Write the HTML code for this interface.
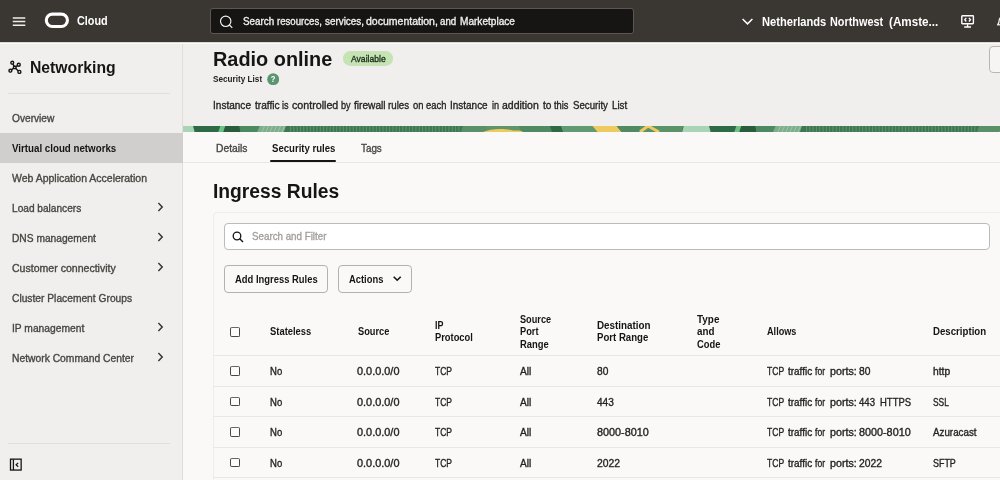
<!DOCTYPE html>
<html lang="en"><head><meta charset="utf-8"><title>Radio online - Security List</title>
<style>
*{box-sizing:border-box;margin:0;padding:0}
html,body{width:1000px;height:480px;overflow:hidden}
body{font-family:"Liberation Sans",sans-serif;background:#f1efed;color:#161513;position:relative}
.a{position:absolute}
.x{position:absolute;white-space:nowrap;transform-origin:0 50%}
#hdr{position:absolute;left:0;top:0;width:1000px;height:42px;background:#3a3632;border-bottom:0}
#side{position:absolute;left:0;top:44px;width:183px;height:436px;background:#f1efed;border-right:1px solid #e1deda}
#lower{position:absolute;left:183px;top:132px;width:817px;height:348px;background:#fbf9f8}
.cb{position:absolute;left:229.8px;width:10.5px;height:9.9px;border:1.2px solid #4a4744;border-top-color:#6b6864;border-radius:2px;background:#fdfcfb}
.hl{position:absolute;left:213.5px;width:787px;height:1px;background:#e9e7e4}
.chev{position:absolute;left:157px;width:7px;height:10px}
.btn{position:absolute;top:265px;height:27.5px;border:1px solid #b4b1ae;border-radius:4px;background:#fbf9f8}
</style></head><body>
<div id="app" style="position:absolute;left:0;top:0;width:1000px;height:480px;overflow:hidden;will-change:transform">
<header id="hdr"></header>
<div class="a" style="left:0;top:42px;width:1000px;height:1px;background:#dcdad7"></div><div class="a" style="left:0;top:43px;width:1000px;height:1px;background:#fbfaf9"></div>
<svg class="a" style="left:12px;top:15px" width="14" height="13" viewBox="0 0 14 13"><path d="M0.8 2.9h12.5M0.8 6.55h12.5M0.8 10.15h12.5" stroke="#efedea" stroke-width="1.5" fill="none"/></svg>
<svg class="a" style="left:43px;top:11px" width="28" height="19" viewBox="0 0 28 19"><rect x="3.3" y="3.1" width="21.15" height="12.45" rx="6.22" ry="6.22" fill="none" stroke="#fff" stroke-width="3.1"/></svg>
<div class="a" style="left:210px;top:8px;width:424px;height:25.7px;background:#161513;border:1px solid #5c5753;border-radius:3px"></div>
<svg class="a" style="left:219px;top:15px" width="15" height="14" viewBox="0 0 15 14"><circle cx="6.7" cy="6.3" r="5.2" fill="none" stroke="#f5f3f1" stroke-width="1.15"/><path d="M10.4 10l2.9 2.9" stroke="#f5f3f1" stroke-width="1.15"/></svg>
<svg class="a" style="left:741px;top:17px" width="13" height="9" viewBox="0 0 13 9"><path d="M1.6 2l4.9 4.9L11.4 2" stroke="#fff" stroke-width="1.5" fill="none"/></svg>
<svg class="a" style="left:961px;top:15px" width="14" height="13" viewBox="0 0 14 13"><rect x="0.8" y="0.7" width="11.6" height="8" rx="0.6" fill="none" stroke="#fff" stroke-width="1.4"/><path d="M6.6 9.2v2.4M3.2 12h6.8" stroke="#fff" stroke-width="1.3"/><path d="M5.3 2.9L3.7 4.7l1.6 1.8M7.9 2.9l1.6 1.8-1.6 1.8" stroke="#fff" stroke-width="1.3" fill="none"/></svg>
<svg class="a" style="left:996.7px;top:15.6px" width="6" height="11" viewBox="0 0 6 11"><path d="M0.8 8.5c1.2-1 1.4-2.6 1.4-4.4 0-1.8 1.4-3.2 3.8-3.2" stroke="#fff" stroke-width="1.2" fill="none"/><path d="M0 8.8h6" stroke="#fff" stroke-width="1.2"/></svg>

<nav id="side"></nav>
<svg class="a" style="left:8px;top:60px" width="15" height="15" viewBox="0 0 15 15"><g stroke="#161513" stroke-width="1.4" fill="none"><path d="M6.75 7.4L4.25 2.75M6.75 7.4L10.75 4.75M6.75 7.4L2.4 10.65M6.75 7.4L11.4 11.9"/></g><g fill="#f1efed" stroke="#161513" stroke-width="1.4"><circle cx="4.25" cy="2.75" r="1.45"/><circle cx="10.75" cy="4.75" r="1.5"/><circle cx="2.4" cy="10.65" r="1.45"/><circle cx="11.4" cy="11.9" r="1.5"/><rect x="5.55" y="6.2" width="2.4" height="2.4" rx="0.4"/></g></svg>
<div class="a" style="left:7.5px;top:92.5px;width:162px;height:1px;background:#e2dfdb"></div>
<div class="a" style="left:0;top:133px;width:182.5px;height:29.5px;background:#d1cfcd"></div>
<svg class="chev" style="top:202px" viewBox="0 0 7 10"><path d="M1.4 1.1l3.8 3.9-3.8 3.9" stroke="#3a3734" stroke-width="1.5" fill="none"/></svg>
<svg class="chev" style="top:232px" viewBox="0 0 7 10"><path d="M1.4 1.1l3.8 3.9-3.8 3.9" stroke="#3a3734" stroke-width="1.5" fill="none"/></svg>
<svg class="chev" style="top:262px" viewBox="0 0 7 10"><path d="M1.4 1.1l3.8 3.9-3.8 3.9" stroke="#3a3734" stroke-width="1.5" fill="none"/></svg>
<svg class="chev" style="top:322px" viewBox="0 0 7 10"><path d="M1.4 1.1l3.8 3.9-3.8 3.9" stroke="#3a3734" stroke-width="1.5" fill="none"/></svg>
<svg class="chev" style="top:352px" viewBox="0 0 7 10"><path d="M1.4 1.1l3.8 3.9-3.8 3.9" stroke="#3a3734" stroke-width="1.5" fill="none"/></svg>
<div class="a" style="left:7.5px;top:443px;width:162px;height:1px;background:#e2dfdb"></div>
<svg class="a" style="left:9px;top:457.5px" width="14" height="14" viewBox="0 0 14 14"><rect x="1.5" y="1.15" width="10.65" height="10.9" fill="none" stroke="#161513" stroke-width="1.3"/><path d="M4.4 1.2v10.8" stroke="#161513" stroke-width="1.3"/><path d="M9.2 4.9L7.1 6.8l2.1 1.9" stroke="#161513" stroke-width="1.2" fill="none"/></svg>

<!-- title area -->
<div class="a" style="left:342.5px;top:51.2px;width:50px;height:14.6px;border-radius:7.3px;background:#c5e3b3"></div>
<svg class="a" style="left:266.5px;top:72.8px" width="12.4" height="12.4" viewBox="0 0 12.4 12.4"><circle cx="6.2" cy="6.2" r="6" fill="#5a966f"/><text x="6.2" y="9.3" font-family="Liberation Sans, sans-serif" font-size="9" font-weight="bold" fill="#fff" text-anchor="middle" transform="translate(0.95 0) scale(0.85 1)">?</text></svg>
<div class="a" style="left:989.4px;top:46px;width:20px;height:26.6px;border:1px solid #b9b5b1;border-radius:4px;background:#f7f5f3"></div>

<main id="lower"></main>
<svg class="a" style="left:183px;top:126px" width="817" height="6" viewBox="183 0 817 6" preserveAspectRatio="none">
<rect x="183" y="0" width="817" height="6" fill="#3f7752"/>
<polygon points="167.8,0 193.4,0 195.0,6 166.2,6" fill="#a9d4b5"/>
<polygon points="193.1,0 220.6,0 218.6,6 194.7,6" fill="#2e6a46"/>
<polygon points="220.3,0 225.6,0 223.6,6 218.3,6" fill="#6cc283"/>
<polygon points="225.3,0 239.6,0 240.6,6 223.3,6" fill="#2a5c3c"/>
<polygon points="239.3,0 259.9,0 257.4,6 240.3,6" fill="#4b8a60"/>
<polygon points="259.6,0 286.3,0 284.3,6 257.1,6" fill="#7fae8c"/>
<polygon points="286.0,0 463.3,0 461.3,6 284.0,6" fill="#3f7752"/>
<polygon points="463.0,0 487.3,0 487.3,6 461.0,6" fill="#5a9069"/>
<polygon points="487.0,0 519.3,0 521.3,6 487.0,6" fill="#5f9569"/>
<polygon points="519.0,0 550.3,0 552.3,6 521.0,6" fill="#4f8a62"/>
<polygon points="550.0,0 561.3,0 563.3,6 552.0,6" fill="#2e6a46"/>
<polygon points="561.0,0 592.8,0 597.8,6 563.0,6" fill="#5f9a72"/>
<polygon points="592.5,0 616.8,0 621.8,6 597.5,6" fill="#efcb5f"/>
<polygon points="616.5,0 640.3,0 640.3,6 621.5,6" fill="#4f8a62"/>
<polygon points="640.0,0 683.1,0 681.5,6 640.0,6" fill="#5b9369"/>
<rect x="290.0" y="0" width="1.1" height="6" fill="#79ab89" opacity="0.5"/>
<rect x="293.3" y="0" width="1.1" height="6" fill="#79ab89" opacity="0.5"/>
<rect x="296.6" y="0" width="1.1" height="6" fill="#79ab89" opacity="0.5"/>
<rect x="299.9" y="0" width="1.1" height="6" fill="#79ab89" opacity="0.5"/>
<rect x="303.2" y="0" width="1.1" height="6" fill="#79ab89" opacity="0.5"/>
<rect x="306.5" y="0" width="1.1" height="6" fill="#79ab89" opacity="0.5"/>
<rect x="309.8" y="0" width="1.1" height="6" fill="#79ab89" opacity="0.5"/>
<rect x="313.1" y="0" width="1.1" height="6" fill="#79ab89" opacity="0.5"/>
<rect x="316.4" y="0" width="1.1" height="6" fill="#79ab89" opacity="0.5"/>
<rect x="319.7" y="0" width="1.1" height="6" fill="#79ab89" opacity="0.5"/>
<rect x="323.0" y="0" width="1.1" height="6" fill="#79ab89" opacity="0.5"/>
<rect x="326.3" y="0" width="1.1" height="6" fill="#79ab89" opacity="0.5"/>
<rect x="329.6" y="0" width="1.1" height="6" fill="#79ab89" opacity="0.5"/>
<rect x="332.9" y="0" width="1.1" height="6" fill="#79ab89" opacity="0.5"/>
<rect x="336.2" y="0" width="1.1" height="6" fill="#79ab89" opacity="0.5"/>
<rect x="339.5" y="0" width="1.1" height="6" fill="#79ab89" opacity="0.5"/>
<rect x="342.8" y="0" width="1.1" height="6" fill="#79ab89" opacity="0.5"/>
<rect x="346.1" y="0" width="1.1" height="6" fill="#79ab89" opacity="0.5"/>
<rect x="349.4" y="0" width="1.1" height="6" fill="#79ab89" opacity="0.5"/>
<rect x="352.7" y="0" width="1.1" height="6" fill="#79ab89" opacity="0.5"/>
<rect x="356.0" y="0" width="1.1" height="6" fill="#79ab89" opacity="0.5"/>
<rect x="359.3" y="0" width="1.1" height="6" fill="#79ab89" opacity="0.5"/>
<rect x="362.6" y="0" width="1.1" height="6" fill="#79ab89" opacity="0.5"/>
<rect x="365.9" y="0" width="1.1" height="6" fill="#79ab89" opacity="0.5"/>
<rect x="369.2" y="0" width="1.1" height="6" fill="#79ab89" opacity="0.5"/>
<rect x="372.5" y="0" width="1.1" height="6" fill="#79ab89" opacity="0.5"/>
<rect x="375.8" y="0" width="1.1" height="6" fill="#79ab89" opacity="0.5"/>
<rect x="379.1" y="0" width="1.1" height="6" fill="#79ab89" opacity="0.5"/>
<rect x="382.4" y="0" width="1.1" height="6" fill="#79ab89" opacity="0.5"/>
<rect x="385.7" y="0" width="1.1" height="6" fill="#79ab89" opacity="0.5"/>
<rect x="389.0" y="0" width="1.1" height="6" fill="#79ab89" opacity="0.5"/>
<rect x="392.3" y="0" width="1.1" height="6" fill="#79ab89" opacity="0.5"/>
<rect x="395.6" y="0" width="1.1" height="6" fill="#79ab89" opacity="0.5"/>
<rect x="398.9" y="0" width="1.1" height="6" fill="#79ab89" opacity="0.5"/>
<rect x="402.2" y="0" width="1.1" height="6" fill="#79ab89" opacity="0.5"/>
<rect x="405.5" y="0" width="1.1" height="6" fill="#79ab89" opacity="0.5"/>
<rect x="408.8" y="0" width="1.1" height="6" fill="#79ab89" opacity="0.5"/>
<rect x="412.1" y="0" width="1.1" height="6" fill="#79ab89" opacity="0.5"/>
<rect x="415.4" y="0" width="1.1" height="6" fill="#79ab89" opacity="0.5"/>
<rect x="418.7" y="0" width="1.1" height="6" fill="#79ab89" opacity="0.5"/>
<rect x="422.0" y="0" width="1.1" height="6" fill="#79ab89" opacity="0.5"/>
<rect x="425.3" y="0" width="1.1" height="6" fill="#79ab89" opacity="0.5"/>
<rect x="428.6" y="0" width="1.1" height="6" fill="#79ab89" opacity="0.5"/>
<rect x="431.9" y="0" width="1.1" height="6" fill="#79ab89" opacity="0.5"/>
<rect x="435.2" y="0" width="1.1" height="6" fill="#79ab89" opacity="0.5"/>
<rect x="438.5" y="0" width="1.1" height="6" fill="#79ab89" opacity="0.5"/>
<rect x="441.8" y="0" width="1.1" height="6" fill="#79ab89" opacity="0.5"/>
<rect x="445.1" y="0" width="1.1" height="6" fill="#79ab89" opacity="0.5"/>
<rect x="448.4" y="0" width="1.1" height="6" fill="#79ab89" opacity="0.5"/>
<rect x="451.7" y="0" width="1.1" height="6" fill="#79ab89" opacity="0.5"/>
<rect x="455.0" y="0" width="1.1" height="6" fill="#79ab89" opacity="0.5"/>
<rect x="458.3" y="0" width="1.1" height="6" fill="#79ab89" opacity="0.5"/>
<path d="M262.0,6 l2.5,-6" stroke="#cfe5d5" stroke-width="0.7" opacity="0.55"/>
<path d="M266.0,6 l2.5,-6" stroke="#cfe5d5" stroke-width="0.7" opacity="0.55"/>
<path d="M270.0,6 l2.5,-6" stroke="#cfe5d5" stroke-width="0.7" opacity="0.55"/>
<path d="M274.0,6 l2.5,-6" stroke="#cfe5d5" stroke-width="0.7" opacity="0.55"/>
<path d="M278.0,6 l2.5,-6" stroke="#cfe5d5" stroke-width="0.7" opacity="0.55"/>
<path d="M282.0,6 l2.5,-6" stroke="#cfe5d5" stroke-width="0.7" opacity="0.55"/>
<path d="M483,6 C491,2 505,2.5 511,4 S519,3 523,6 Z" fill="#efcb5f"/>
<path d="M640,6 L648,0 M648,0 L659,6" stroke="#efcb5f" stroke-width="3" fill="none"/>
<polygon points="683.8,0 709.4,0 711.0,6 682.2,6" fill="#a9d4b5"/>
<polygon points="709.1,0 736.6,0 734.6,6 710.7,6" fill="#2e6a46"/>
<polygon points="736.3,0 741.6,0 739.6,6 734.3,6" fill="#6cc283"/>
<polygon points="741.3,0 755.6,0 756.6,6 739.3,6" fill="#2a5c3c"/>
<polygon points="755.3,0 775.8,0 773.3,6 756.3,6" fill="#4b8a60"/>
<polygon points="775.5,0 802.3,0 800.3,6 773.0,6" fill="#7fae8c"/>
<polygon points="802.0,0 979.3,0 977.3,6 800.0,6" fill="#3f7752"/>
<polygon points="979.0,0 1003.3,0 1003.3,6 977.0,6" fill="#5a9069"/>
<rect x="806.0" y="0" width="1.1" height="6" fill="#79ab89" opacity="0.5"/>
<rect x="809.3" y="0" width="1.1" height="6" fill="#79ab89" opacity="0.5"/>
<rect x="812.6" y="0" width="1.1" height="6" fill="#79ab89" opacity="0.5"/>
<rect x="815.9" y="0" width="1.1" height="6" fill="#79ab89" opacity="0.5"/>
<rect x="819.2" y="0" width="1.1" height="6" fill="#79ab89" opacity="0.5"/>
<rect x="822.5" y="0" width="1.1" height="6" fill="#79ab89" opacity="0.5"/>
<rect x="825.8" y="0" width="1.1" height="6" fill="#79ab89" opacity="0.5"/>
<rect x="829.1" y="0" width="1.1" height="6" fill="#79ab89" opacity="0.5"/>
<rect x="832.4" y="0" width="1.1" height="6" fill="#79ab89" opacity="0.5"/>
<rect x="835.7" y="0" width="1.1" height="6" fill="#79ab89" opacity="0.5"/>
<rect x="839.0" y="0" width="1.1" height="6" fill="#79ab89" opacity="0.5"/>
<rect x="842.3" y="0" width="1.1" height="6" fill="#79ab89" opacity="0.5"/>
<rect x="845.6" y="0" width="1.1" height="6" fill="#79ab89" opacity="0.5"/>
<rect x="848.9" y="0" width="1.1" height="6" fill="#79ab89" opacity="0.5"/>
<rect x="852.2" y="0" width="1.1" height="6" fill="#79ab89" opacity="0.5"/>
<rect x="855.5" y="0" width="1.1" height="6" fill="#79ab89" opacity="0.5"/>
<rect x="858.8" y="0" width="1.1" height="6" fill="#79ab89" opacity="0.5"/>
<rect x="862.1" y="0" width="1.1" height="6" fill="#79ab89" opacity="0.5"/>
<rect x="865.4" y="0" width="1.1" height="6" fill="#79ab89" opacity="0.5"/>
<rect x="868.7" y="0" width="1.1" height="6" fill="#79ab89" opacity="0.5"/>
<rect x="872.0" y="0" width="1.1" height="6" fill="#79ab89" opacity="0.5"/>
<rect x="875.3" y="0" width="1.1" height="6" fill="#79ab89" opacity="0.5"/>
<rect x="878.6" y="0" width="1.1" height="6" fill="#79ab89" opacity="0.5"/>
<rect x="881.9" y="0" width="1.1" height="6" fill="#79ab89" opacity="0.5"/>
<rect x="885.2" y="0" width="1.1" height="6" fill="#79ab89" opacity="0.5"/>
<rect x="888.5" y="0" width="1.1" height="6" fill="#79ab89" opacity="0.5"/>
<rect x="891.8" y="0" width="1.1" height="6" fill="#79ab89" opacity="0.5"/>
<rect x="895.1" y="0" width="1.1" height="6" fill="#79ab89" opacity="0.5"/>
<rect x="898.4" y="0" width="1.1" height="6" fill="#79ab89" opacity="0.5"/>
<rect x="901.7" y="0" width="1.1" height="6" fill="#79ab89" opacity="0.5"/>
<rect x="905.0" y="0" width="1.1" height="6" fill="#79ab89" opacity="0.5"/>
<rect x="908.3" y="0" width="1.1" height="6" fill="#79ab89" opacity="0.5"/>
<rect x="911.6" y="0" width="1.1" height="6" fill="#79ab89" opacity="0.5"/>
<rect x="914.9" y="0" width="1.1" height="6" fill="#79ab89" opacity="0.5"/>
<rect x="918.2" y="0" width="1.1" height="6" fill="#79ab89" opacity="0.5"/>
<rect x="921.5" y="0" width="1.1" height="6" fill="#79ab89" opacity="0.5"/>
<rect x="924.8" y="0" width="1.1" height="6" fill="#79ab89" opacity="0.5"/>
<rect x="928.1" y="0" width="1.1" height="6" fill="#79ab89" opacity="0.5"/>
<rect x="931.4" y="0" width="1.1" height="6" fill="#79ab89" opacity="0.5"/>
<rect x="934.7" y="0" width="1.1" height="6" fill="#79ab89" opacity="0.5"/>
<rect x="938.0" y="0" width="1.1" height="6" fill="#79ab89" opacity="0.5"/>
<rect x="941.3" y="0" width="1.1" height="6" fill="#79ab89" opacity="0.5"/>
<rect x="944.6" y="0" width="1.1" height="6" fill="#79ab89" opacity="0.5"/>
<rect x="947.9" y="0" width="1.1" height="6" fill="#79ab89" opacity="0.5"/>
<rect x="951.2" y="0" width="1.1" height="6" fill="#79ab89" opacity="0.5"/>
<rect x="954.5" y="0" width="1.1" height="6" fill="#79ab89" opacity="0.5"/>
<rect x="957.8" y="0" width="1.1" height="6" fill="#79ab89" opacity="0.5"/>
<rect x="961.1" y="0" width="1.1" height="6" fill="#79ab89" opacity="0.5"/>
<rect x="964.4" y="0" width="1.1" height="6" fill="#79ab89" opacity="0.5"/>
<rect x="967.7" y="0" width="1.1" height="6" fill="#79ab89" opacity="0.5"/>
<rect x="971.0" y="0" width="1.1" height="6" fill="#79ab89" opacity="0.5"/>
<rect x="974.3" y="0" width="1.1" height="6" fill="#79ab89" opacity="0.5"/>
<path d="M778.0,6 l2.5,-6" stroke="#cfe5d5" stroke-width="0.7" opacity="0.55"/>
<path d="M782.0,6 l2.5,-6" stroke="#cfe5d5" stroke-width="0.7" opacity="0.55"/>
<path d="M786.0,6 l2.5,-6" stroke="#cfe5d5" stroke-width="0.7" opacity="0.55"/>
<path d="M790.0,6 l2.5,-6" stroke="#cfe5d5" stroke-width="0.7" opacity="0.55"/>
<path d="M794.0,6 l2.5,-6" stroke="#cfe5d5" stroke-width="0.7" opacity="0.55"/>
<path d="M798.0,6 l2.5,-6" stroke="#cfe5d5" stroke-width="0.7" opacity="0.55"/>
<path d="M999,6 C1007,2 1021,2.5 1027,4 S1035,3 1039,6 Z" fill="#efcb5f"/>
<path d="M1156,6 L1164,0 M1164,0 L1175,6" stroke="#efcb5f" stroke-width="3" fill="none"/>
</svg>
<!-- tabs -->
<div class="a" style="left:183px;top:162px;width:817px;height:1px;background:#e9e6e3"></div>
<div class="a" style="left:270px;top:159.6px;width:66.2px;height:2.6px;border-radius:1.3px;background:#161513"></div>
<!-- card -->
<div class="a" style="left:213px;top:212.2px;width:800px;height:300px;border:1px solid #efedea;border-radius:4px;background:#fbf9f8"></div>
<div class="a" style="left:223.5px;top:222.5px;width:766.5px;height:27.5px;border:1px solid #bdbbb8;border-radius:4px;background:#fff"></div>
<svg class="a" style="left:232px;top:230.5px" width="12" height="12" viewBox="0 0 12 12"><circle cx="5" cy="5" r="3.8" fill="none" stroke="#161513" stroke-width="1.3"/><path d="M7.8 7.8l3.2 3.2" stroke="#161513" stroke-width="1.4"/></svg>
<div class="btn" style="left:223.5px;width:104.3px"></div>
<div class="btn" style="left:338.2px;width:73.6px"></div>
<svg class="a" style="left:391.9px;top:275.4px" width="10" height="7" viewBox="0 0 10 7"><path d="M1.7 1.7l3.5 3.5 3.5-3.5" stroke="#161513" stroke-width="1.6" fill="none"/></svg>
<!-- table -->
<div class="cb" style="top:326.7px"></div>
<div class="cb" style="top:366.2px"></div>
<div class="cb" style="top:396.6px"></div>
<div class="cb" style="top:427.1px"></div>
<div class="cb" style="top:457.6px"></div>
<div class="hl" style="top:355px"></div>
<div class="hl" style="top:385.8px"></div>
<div class="hl" style="top:416.3px"></div>
<div class="hl" style="top:446.8px"></div>
<div class="hl" style="top:477.3px"></div>
<div id="tx" style="position:absolute;left:0;top:0;width:1000px;height:480px">
<div class="x" style="left:76.80px;top:14.00px;font-size:12.5px;line-height:15px;color:#ffffff;transform:scaleX(0.8685);font-weight:bold">Cloud</div>
<div class="s"><span class="x" style="left:242.80px;top:16.00px;font-size:10.2px;line-height:12px;color:#f1efed;transform:scaleX(0.9648);-webkit-text-stroke:0.34px #f1efed">Search</span> <span class="x" style="left:277.10px;top:16.00px;font-size:10.2px;line-height:12px;color:#f1efed;transform:scaleX(0.9437);-webkit-text-stroke:0.34px #f1efed">resources,</span> <span class="x" style="left:324.70px;top:16.00px;font-size:10.2px;line-height:12px;color:#f1efed;transform:scaleX(0.9705);-webkit-text-stroke:0.34px #f1efed">services,</span> <span class="x" style="left:366.00px;top:16.00px;font-size:10.2px;line-height:12px;color:#f1efed;transform:scaleX(1.0315);-webkit-text-stroke:0.34px #f1efed">documentation,</span> <span class="x" style="left:440.20px;top:16.00px;font-size:10.2px;line-height:12px;color:#f1efed;transform:scaleX(0.9520);-webkit-text-stroke:0.34px #f1efed">and</span> <span class="x" style="left:460.10px;top:16.00px;font-size:10.2px;line-height:12px;color:#f1efed;transform:scaleX(0.9888);-webkit-text-stroke:0.34px #f1efed">Marketplace</span></div>
<div class="s"><span class="x" style="left:762.00px;top:15.00px;font-size:12.6px;line-height:15px;color:#ffffff;transform:scaleX(0.8835);font-weight:bold">Netherlands</span> <span class="x" style="left:830.40px;top:15.00px;font-size:12.6px;line-height:15px;color:#ffffff;transform:scaleX(0.8625);font-weight:bold">Northwest</span> <span class="x" style="left:888.60px;top:15.00px;font-size:12.6px;line-height:15px;color:#ffffff;transform:scaleX(0.9262);font-weight:bold">(Amste...</span></div>
<div class="x" style="left:29.62px;top:58.00px;font-size:16px;line-height:19px;color:#161513;transform:scaleX(0.9831);font-weight:bold">Networking</div>
<div class="x" style="left:12.00px;top:113.00px;font-size:10.2px;line-height:12px;color:#484542;transform:scaleX(0.9977);-webkit-text-stroke:0.34px #484542">Overview</div>
<div class="x" style="left:12.20px;top:142.00px;font-size:10.7px;line-height:13px;color:#161513;transform:scaleX(0.9111);font-weight:bold">Virtual cloud networks</div>
<div class="x" style="left:12.00px;top:173.00px;font-size:10.2px;line-height:12px;color:#484542;transform:scaleX(1.0292);-webkit-text-stroke:0.34px #484542">Web Application Acceleration</div>
<div class="x" style="left:12.40px;top:203.00px;font-size:10.2px;line-height:12px;color:#484542;transform:scaleX(0.9932);-webkit-text-stroke:0.34px #484542">Load balancers</div>
<div class="x" style="left:12.40px;top:233.00px;font-size:10.2px;line-height:12px;color:#484542;transform:scaleX(1.0015);-webkit-text-stroke:0.34px #484542">DNS management</div>
<div class="x" style="left:12.00px;top:263.00px;font-size:10.2px;line-height:12px;color:#484542;transform:scaleX(1.0354);-webkit-text-stroke:0.34px #484542">Customer connectivity</div>
<div class="x" style="left:12.00px;top:293.00px;font-size:10.2px;line-height:12px;color:#484542;transform:scaleX(1.0052);-webkit-text-stroke:0.34px #484542">Cluster Placement Groups</div>
<div class="x" style="left:12.40px;top:323.00px;font-size:10.2px;line-height:12px;color:#484542;transform:scaleX(1.0071);-webkit-text-stroke:0.34px #484542">IP management</div>
<div class="x" style="left:12.40px;top:353.00px;font-size:10.2px;line-height:12px;color:#484542;transform:scaleX(1.0115);-webkit-text-stroke:0.34px #484542">Network Command Center</div>
<div class="x" style="left:213.31px;top:47.00px;font-size:20px;line-height:24px;color:#161513;transform:scaleX(0.9943);font-weight:bold">Radio online</div>
<div class="x" style="left:350.50px;top:53.00px;font-size:9.4px;line-height:11px;color:#1a2e1d;transform:scaleX(0.9161);-webkit-text-stroke:0.34px #1a2e1d">Available</div>
<div class="x" style="left:213.40px;top:73.00px;font-size:9.7px;line-height:12px;color:#201e1c;transform:scaleX(0.8452);font-weight:bold">Security List</div>
<div class="s"><span class="x" style="left:212.98px;top:99.00px;font-size:10.9px;line-height:13px;color:#262422;transform:scaleX(0.9224);-webkit-text-stroke:0.34px #262422">Instance</span> <span class="x" style="left:254.50px;top:99.00px;font-size:10.9px;line-height:13px;color:#262422;transform:scaleX(0.9302);-webkit-text-stroke:0.34px #262422">traffic</span> <span class="x" style="left:282.41px;top:99.00px;font-size:10.9px;line-height:13px;color:#262422;transform:scaleX(0.8400);-webkit-text-stroke:0.34px #262422">is</span> <span class="x" style="left:292.30px;top:99.00px;font-size:10.9px;line-height:13px;color:#262422;transform:scaleX(0.9796);-webkit-text-stroke:0.34px #262422">controlled</span> <span class="x" style="left:341.09px;top:99.00px;font-size:10.9px;line-height:13px;color:#262422;transform:scaleX(0.8400);-webkit-text-stroke:0.34px #262422">by</span> <span class="x" style="left:353.50px;top:99.00px;font-size:10.9px;line-height:13px;color:#262422;transform:scaleX(0.9322);-webkit-text-stroke:0.34px #262422">firewall</span> <span class="x" style="left:387.80px;top:99.00px;font-size:10.9px;line-height:13px;color:#262422;transform:scaleX(0.8982);-webkit-text-stroke:0.34px #262422">rules</span> <span class="x" style="left:412.70px;top:99.00px;font-size:10.9px;line-height:13px;color:#262422;transform:scaleX(0.8626);-webkit-text-stroke:0.34px #262422">on</span> <span class="x" style="left:426.30px;top:99.00px;font-size:10.9px;line-height:13px;color:#262422;transform:scaleX(0.8617);-webkit-text-stroke:0.34px #262422">each</span> <span class="x" style="left:449.59px;top:99.00px;font-size:10.9px;line-height:13px;color:#262422;transform:scaleX(0.9149);-webkit-text-stroke:0.34px #262422">Instance</span> <span class="x" style="left:491.66px;top:99.00px;font-size:10.9px;line-height:13px;color:#262422;transform:scaleX(0.8400);-webkit-text-stroke:0.34px #262422">in</span> <span class="x" style="left:502.30px;top:99.00px;font-size:10.9px;line-height:13px;color:#262422;transform:scaleX(0.9634);-webkit-text-stroke:0.34px #262422">addition</span> <span class="x" style="left:542.50px;top:99.00px;font-size:10.9px;line-height:13px;color:#262422;transform:scaleX(0.9307);-webkit-text-stroke:0.34px #262422">to</span> <span class="x" style="left:554.10px;top:99.00px;font-size:10.9px;line-height:13px;color:#262422;transform:scaleX(0.8570);-webkit-text-stroke:0.34px #262422">this</span> <span class="x" style="left:572.60px;top:99.00px;font-size:10.9px;line-height:13px;color:#262422;transform:scaleX(0.8873);-webkit-text-stroke:0.34px #262422">Security</span> <span class="x" style="left:611.80px;top:99.00px;font-size:10.9px;line-height:13px;color:#262422;transform:scaleX(0.8983);-webkit-text-stroke:0.34px #262422">List</span></div>
<div class="x" style="left:216.20px;top:143.00px;font-size:10.2px;line-height:12px;color:#484542;transform:scaleX(1.0082);-webkit-text-stroke:0.34px #484542">Details</div>
<div class="x" style="left:271.50px;top:142.00px;font-size:10.7px;line-height:13px;color:#161513;transform:scaleX(0.8976);font-weight:bold">Security rules</div>
<div class="x" style="left:361.30px;top:143.00px;font-size:10.2px;line-height:12px;color:#484542;transform:scaleX(0.9662);-webkit-text-stroke:0.34px #484542">Tags</div>
<div class="x" style="left:213.34px;top:179.00px;font-size:20px;line-height:24px;color:#161513;transform:scaleX(0.9628);font-weight:bold">Ingress Rules</div>
<div class="x" style="left:252.00px;top:231.00px;font-size:10.2px;line-height:12px;color:#a39f9b;transform:scaleX(0.9593);-webkit-text-stroke:0.34px #a39f9b">Search and Filter</div>
<div class="x" style="left:234.50px;top:273.00px;font-size:10.7px;line-height:13px;color:#161513;transform:scaleX(0.8808);font-weight:bold">Add Ingress Rules</div>
<div class="x" style="left:349.30px;top:273.00px;font-size:10.7px;line-height:13px;color:#161513;transform:scaleX(0.8765);font-weight:bold">Actions</div>
<div class="x" style="left:269.80px;top:325.00px;font-size:10.6px;line-height:13px;color:#161513;transform:scaleX(0.8878);font-weight:bold">Stateless</div>
<div class="x" style="left:357.50px;top:325.00px;font-size:10.6px;line-height:13px;color:#161513;transform:scaleX(0.8745);font-weight:bold">Source</div>
<div class="x" style="left:435.30px;top:319.00px;font-size:10.6px;line-height:13px;color:#161513;transform:scaleX(0.8448);font-weight:bold">IP</div>
<div class="x" style="left:435.30px;top:331.00px;font-size:10.6px;line-height:13px;color:#161513;transform:scaleX(0.8810);font-weight:bold">Protocol</div>
<div class="x" style="left:519.50px;top:313.00px;font-size:10.6px;line-height:13px;color:#161513;transform:scaleX(0.8661);font-weight:bold">Source</div>
<div class="x" style="left:519.80px;top:325.00px;font-size:10.6px;line-height:13px;color:#161513;transform:scaleX(0.8726);font-weight:bold">Port</div>
<div class="x" style="left:519.80px;top:338.00px;font-size:10.6px;line-height:13px;color:#161513;transform:scaleX(0.8897);font-weight:bold">Range</div>
<div class="x" style="left:597.30px;top:319.00px;font-size:10.6px;line-height:13px;color:#161513;transform:scaleX(0.9299);font-weight:bold">Destination</div>
<div class="x" style="left:597.30px;top:331.00px;font-size:10.6px;line-height:13px;color:#161513;transform:scaleX(0.9079);font-weight:bold">Port Range</div>
<div class="x" style="left:697.00px;top:313.00px;font-size:10.6px;line-height:13px;color:#161513;transform:scaleX(0.9357);font-weight:bold">Type</div>
<div class="x" style="left:697.00px;top:325.00px;font-size:10.6px;line-height:13px;color:#161513;transform:scaleX(0.9258);font-weight:bold">and</div>
<div class="x" style="left:697.00px;top:338.00px;font-size:10.6px;line-height:13px;color:#161513;transform:scaleX(0.8837);font-weight:bold">Code</div>
<div class="x" style="left:766.70px;top:325.00px;font-size:10.6px;line-height:13px;color:#161513;transform:scaleX(0.8614);font-weight:bold">Allows</div>
<div class="x" style="left:932.50px;top:325.00px;font-size:10.6px;line-height:13px;color:#161513;transform:scaleX(0.9117);font-weight:bold">Description</div>
<div class="x" style="left:270.00px;top:366.00px;font-size:10.2px;line-height:12px;color:#262422;transform:scaleX(0.9358);-webkit-text-stroke:0.34px #262422">No</div>
<div class="x" style="left:357.20px;top:366.00px;font-size:10.2px;line-height:12px;color:#262422;transform:scaleX(1.0704);-webkit-text-stroke:0.34px #262422">0.0.0.0/0</div>
<div class="x" style="left:435.30px;top:366.00px;font-size:10.2px;line-height:12px;color:#262422;transform:scaleX(0.8358);-webkit-text-stroke:0.34px #262422">TCP</div>
<div class="x" style="left:519.60px;top:366.00px;font-size:10.2px;line-height:12px;color:#262422;transform:scaleX(0.9947);-webkit-text-stroke:0.34px #262422">All</div>
<div class="x" style="left:597.30px;top:366.00px;font-size:10.2px;line-height:12px;color:#262422;transform:scaleX(1.0029);-webkit-text-stroke:0.34px #262422">80</div>
<div class="s"><span class="x" style="left:766.96px;top:366.00px;font-size:10.2px;line-height:12px;color:#262422;transform:scaleX(0.8400);-webkit-text-stroke:0.34px #262422">TCP</span> <span class="x" style="left:787.50px;top:366.00px;font-size:10.2px;line-height:12px;color:#262422;transform:scaleX(0.9745);-webkit-text-stroke:0.34px #262422">traffic</span> <span class="x" style="left:815.15px;top:366.00px;font-size:10.2px;line-height:12px;color:#262422;transform:scaleX(0.8400);-webkit-text-stroke:0.34px #262422">for</span> <span class="x" style="left:830.10px;top:366.00px;font-size:10.2px;line-height:12px;color:#262422;transform:scaleX(1.0508);-webkit-text-stroke:0.34px #262422">ports:</span> <span class="x" style="left:859.20px;top:366.00px;font-size:10.2px;line-height:12px;color:#262422;transform:scaleX(1.0115);-webkit-text-stroke:0.34px #262422">80</span></div>
<div class="x" style="left:932.50px;top:366.00px;font-size:10.2px;line-height:12px;color:#262422;transform:scaleX(1.0100);-webkit-text-stroke:0.34px #262422">http</div>
<div class="x" style="left:270.00px;top:397.00px;font-size:10.2px;line-height:12px;color:#262422;transform:scaleX(0.9358);-webkit-text-stroke:0.34px #262422">No</div>
<div class="x" style="left:357.20px;top:397.00px;font-size:10.2px;line-height:12px;color:#262422;transform:scaleX(1.0704);-webkit-text-stroke:0.34px #262422">0.0.0.0/0</div>
<div class="x" style="left:435.30px;top:397.00px;font-size:10.2px;line-height:12px;color:#262422;transform:scaleX(0.8358);-webkit-text-stroke:0.34px #262422">TCP</div>
<div class="x" style="left:519.60px;top:397.00px;font-size:10.2px;line-height:12px;color:#262422;transform:scaleX(0.9947);-webkit-text-stroke:0.34px #262422">All</div>
<div class="x" style="left:597.30px;top:397.00px;font-size:10.2px;line-height:12px;color:#262422;transform:scaleX(0.9924);-webkit-text-stroke:0.34px #262422">443</div>
<div class="s"><span class="x" style="left:766.96px;top:397.00px;font-size:10.2px;line-height:12px;color:#262422;transform:scaleX(0.8400);-webkit-text-stroke:0.34px #262422">TCP</span> <span class="x" style="left:787.50px;top:397.00px;font-size:10.2px;line-height:12px;color:#262422;transform:scaleX(0.9745);-webkit-text-stroke:0.34px #262422">traffic</span> <span class="x" style="left:815.15px;top:397.00px;font-size:10.2px;line-height:12px;color:#262422;transform:scaleX(0.8400);-webkit-text-stroke:0.34px #262422">for</span> <span class="x" style="left:830.10px;top:397.00px;font-size:10.2px;line-height:12px;color:#262422;transform:scaleX(1.0508);-webkit-text-stroke:0.34px #262422">ports:</span> <span class="x" style="left:859.20px;top:397.00px;font-size:10.2px;line-height:12px;color:#262422;transform:scaleX(0.9405);-webkit-text-stroke:0.34px #262422">443</span> <span class="x" style="left:879.70px;top:397.00px;font-size:10.2px;line-height:12px;color:#262422;transform:scaleX(0.9316);-webkit-text-stroke:0.34px #262422">HTTPS</span></div>
<div class="x" style="left:932.50px;top:397.00px;font-size:10.2px;line-height:12px;color:#262422;transform:scaleX(0.8270);-webkit-text-stroke:0.34px #262422">SSL</div>
<div class="x" style="left:270.00px;top:427.00px;font-size:10.2px;line-height:12px;color:#262422;transform:scaleX(0.9358);-webkit-text-stroke:0.34px #262422">No</div>
<div class="x" style="left:357.20px;top:427.00px;font-size:10.2px;line-height:12px;color:#262422;transform:scaleX(1.0704);-webkit-text-stroke:0.34px #262422">0.0.0.0/0</div>
<div class="x" style="left:435.30px;top:427.00px;font-size:10.2px;line-height:12px;color:#262422;transform:scaleX(0.8358);-webkit-text-stroke:0.34px #262422">TCP</div>
<div class="x" style="left:519.60px;top:427.00px;font-size:10.2px;line-height:12px;color:#262422;transform:scaleX(0.9947);-webkit-text-stroke:0.34px #262422">All</div>
<div class="x" style="left:597.30px;top:427.00px;font-size:10.2px;line-height:12px;color:#262422;transform:scaleX(1.0642);-webkit-text-stroke:0.34px #262422">8000-8010</div>
<div class="s"><span class="x" style="left:766.96px;top:427.00px;font-size:10.2px;line-height:12px;color:#262422;transform:scaleX(0.8400);-webkit-text-stroke:0.34px #262422">TCP</span> <span class="x" style="left:787.50px;top:427.00px;font-size:10.2px;line-height:12px;color:#262422;transform:scaleX(0.9745);-webkit-text-stroke:0.34px #262422">traffic</span> <span class="x" style="left:815.15px;top:427.00px;font-size:10.2px;line-height:12px;color:#262422;transform:scaleX(0.8400);-webkit-text-stroke:0.34px #262422">for</span> <span class="x" style="left:830.10px;top:427.00px;font-size:10.2px;line-height:12px;color:#262422;transform:scaleX(1.0508);-webkit-text-stroke:0.34px #262422">ports:</span> <span class="x" style="left:859.20px;top:427.00px;font-size:10.2px;line-height:12px;color:#262422;transform:scaleX(1.0601);-webkit-text-stroke:0.34px #262422">8000-8010</span></div>
<div class="x" style="left:932.50px;top:427.00px;font-size:10.2px;line-height:12px;color:#262422;transform:scaleX(0.9612);-webkit-text-stroke:0.34px #262422">Azuracast</div>
<div class="x" style="left:270.00px;top:458.00px;font-size:10.2px;line-height:12px;color:#262422;transform:scaleX(0.9358);-webkit-text-stroke:0.34px #262422">No</div>
<div class="x" style="left:357.20px;top:458.00px;font-size:10.2px;line-height:12px;color:#262422;transform:scaleX(1.0704);-webkit-text-stroke:0.34px #262422">0.0.0.0/0</div>
<div class="x" style="left:435.30px;top:458.00px;font-size:10.2px;line-height:12px;color:#262422;transform:scaleX(0.8358);-webkit-text-stroke:0.34px #262422">TCP</div>
<div class="x" style="left:519.60px;top:458.00px;font-size:10.2px;line-height:12px;color:#262422;transform:scaleX(0.9947);-webkit-text-stroke:0.34px #262422">All</div>
<div class="x" style="left:597.30px;top:458.00px;font-size:10.2px;line-height:12px;color:#262422;transform:scaleX(1.0175);-webkit-text-stroke:0.34px #262422">2022</div>
<div class="s"><span class="x" style="left:766.96px;top:458.00px;font-size:10.2px;line-height:12px;color:#262422;transform:scaleX(0.8400);-webkit-text-stroke:0.34px #262422">TCP</span> <span class="x" style="left:787.50px;top:458.00px;font-size:10.2px;line-height:12px;color:#262422;transform:scaleX(0.9745);-webkit-text-stroke:0.34px #262422">traffic</span> <span class="x" style="left:815.15px;top:458.00px;font-size:10.2px;line-height:12px;color:#262422;transform:scaleX(0.8400);-webkit-text-stroke:0.34px #262422">for</span> <span class="x" style="left:830.10px;top:458.00px;font-size:10.2px;line-height:12px;color:#262422;transform:scaleX(1.0508);-webkit-text-stroke:0.34px #262422">ports:</span> <span class="x" style="left:859.20px;top:458.00px;font-size:10.2px;line-height:12px;color:#262422;transform:scaleX(1.0132);-webkit-text-stroke:0.34px #262422">2022</span></div>
<div class="x" style="left:932.50px;top:458.00px;font-size:10.2px;line-height:12px;color:#262422;transform:scaleX(0.8765);-webkit-text-stroke:0.34px #262422">SFTP</div>

</div>
</div>
</body></html>
